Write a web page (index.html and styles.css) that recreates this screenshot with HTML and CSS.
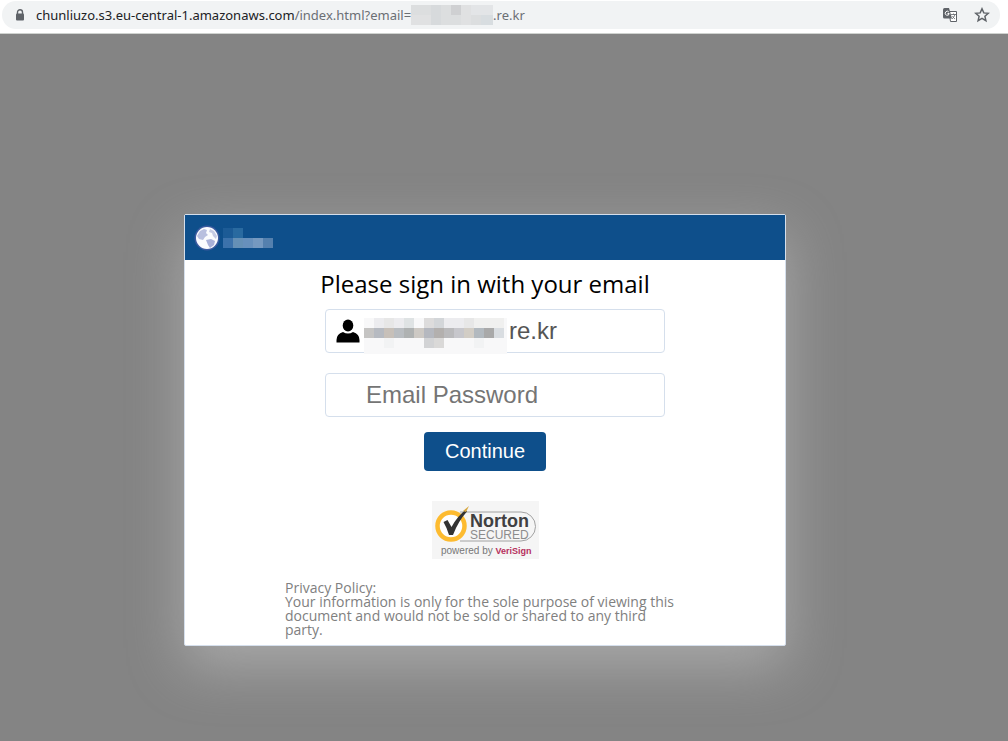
FILE: index.html
```html
<!DOCTYPE html>
<html lang="en">
<head>
    <meta charset="UTF-8">
    <meta name="viewport" content="width=device-width, initial-scale=1.0">
    <title>Sign in</title>
    <link rel="stylesheet" href="styles.css">
</head>
<body>
    <header class="toolbar">
        <div class="address-bar">
            <svg class="lock" viewBox="0 0 10 12" aria-hidden="true">
                <path d="M2.5 5V3.2a2.5 2.5 0 0 1 5 0V5" fill="none" stroke="#5f6368" stroke-width="1.4"/>
                <rect x="1" y="4.5" width="8" height="7" rx="1" fill="#5f6368"/>
            </svg>
            <div class="url">
                <span class="domain">chunliuzo.s3.eu-central-1.amazonaws.com</span><span>/index.html?email=</span>
                <svg class="url-mask" viewBox="0 0 82 20" aria-hidden="true">
                    <rect width="82" height="20" fill="#dcdedf"/>
                    <path d="M20 0h10v20H20z" fill="#d7dadc"/>
                    <path d="M40 0h10v10H40z" fill="#cfd0d2"/>
                    <path d="M50 0h10v20H50zM0 10h20v10H0z" fill="#e0e1e2"/>
                    <path d="M60 0h22v10H60z" fill="#e3e5e7"/>
                    <path d="M70 10h12v10H70z" fill="#d8dde0"/>
                </svg>
                <span>.re.kr</span>
            </div>
            <button class="icon-button" type="button" aria-label="Translate">
                <svg width="14" height="14" viewBox="0 0 14 14">
                    <path d="M6 3.5h7.5v10H7.5z" fill="#fff" stroke="#5f6368"/>
                    <path d="M0 1.500Q0 0 1.500 0H6l3 10.500H1.500Q0 10.500 0 9z" fill="#5f6368"/>
                    <path d="M5.800 4A2 2 0 1 0 6.200 5.500H4.500" fill="none" stroke="#fff"/>
                    <path d="M8 6.500h5M10.500 5.500v1M12 6.500q-1 3-3 4.500M9.500 8q1 2 2.500 3" fill="none" stroke="#5f6368" stroke-width=".8"/>
                </svg>
            </button>
            <button class="icon-button" type="button" aria-label="Bookmark">
                <svg width="16" height="16" viewBox="0 0 16 16">
                    <path d="M8 1.800l1.800 4.100 4.500.4-3.400 3 1 4.400L8 11.400l-3.900 2.300 1-4.400-3.400-3 4.500-.4z" fill="none" stroke="#5f6368" stroke-width="1.500"/>
                </svg>
            </button>
        </div>
    </header>

    <main class="page">
        <div class="card">
            <div class="card-header">
                <svg class="globe" viewBox="0 0 26 26" aria-hidden="true">
                    <circle cx="13" cy="13" r="12.500" fill="#5a62ae" opacity=".6"/>
                    <circle cx="13" cy="13" r="11" fill="#fbfbfe"/>
                    <path d="M6 6l4-2 3 1-1 3 2 2-3 2-2 3-4-1-2-3z" fill="#b9bfdf"/>
                    <path d="M16 4l4 2 3 5-1 3-3-3-1-3-3-1z" fill="#c5cae4"/>
                    <path d="M12 15l5-1 4 2-1 4-4 3-2-3z" fill="#a9b0d8"/>
                </svg>
                <svg class="brand-mask" viewBox="0 0 50 20" aria-hidden="true">
                    <path d="M0 0h10v10H0z" fill="#1c5b96"/>
                    <path d="M10 0h10v10H10z" fill="#296aa0"/>
                    <path d="M0 10h10v10H0z" fill="#3c72ab"/>
                    <path d="M10 10h10v10H10z" fill="#6590b6"/>
                    <path d="M20 10h10v10H20z" fill="#6790bc"/>
                    <path d="M30 10h10v10H30z" fill="#7599c0"/>
                    <path d="M40 10h10v10H40z" fill="#5480ae"/>
                </svg>
            </div>

            <form class="login-form" onsubmit="return false">
                <h1>Please sign in with your email</h1>
                <div class="field">
                    <svg class="user" viewBox="0 0 24 24" aria-hidden="true">
                        <ellipse cx="12" cy="6.500" rx="5.300" ry="6"/>
                        <path d="M.5 23.500V21q0-6 6.500-8 5 3 10 0 6.500 2 6.500 8v2.500z"/>
                    </svg>
                    <svg class="email-mask" viewBox="0 0 143 36" aria-hidden="true">
                        <rect width="143" height="36" fill="#f8f8f9"/>
                        <path d="M10 0h10v10H10zM30 0h10v10H30zM80 0h20v10H80z" fill="#ececef"/>
                        <path d="M20 0h10v10H20zM100 0h10v10h-10z" fill="#e7e7e7"/>
                        <path d="M40 0h10v10H40z" fill="#dfe3e4"/>
                        <path d="M60 0h10v10H60z" fill="#dddcdc"/>
                        <path d="M70 0h10v10H70z" fill="#d3d6d9"/>
                        <path d="M110 0h30v10h-30z" fill="#f0f0ef"/>
                        <path d="M0 10h10v10H0z" fill="#c5c4c3"/>
                        <path d="M10 10h10v10H10z" fill="#b6bac1"/>
                        <path d="M20 10h10v10H20z" fill="#c7c0b9"/>
                        <path d="M30 10h10v10H30z" fill="#b9bdc1"/>
                        <path d="M40 10h10v10H40z" fill="#afb2b2"/>
                        <path d="M50 10h10v10H50z" fill="#cdc9c4"/>
                        <path d="M60 10h10v10H60z" fill="#b5b8bf"/>
                        <path d="M70 10h10v10H70z" fill="#b3b0ae"/>
                        <path d="M80 10h10v10H80z" fill="#bababc"/>
                        <path d="M90 10h10v10H90z" fill="#c7c7cc"/>
                        <path d="M100 10h10v10h-10z" fill="#d2cdc5"/>
                        <path d="M110 10h10v10h-10z" fill="#b2b9bf"/>
                        <path d="M120 10h10v10h-10z" fill="#a9a9a9"/>
                        <path d="M130 10h10v10h-10z" fill="#d9dde1"/>
                        <path d="M60 20h10v10H60z" fill="#d2d3d5"/>
                        <path d="M70 20h10v10H70z" fill="#dad9d8"/>
                        <path d="M20 20h10v10H20zM110 20h10v10h-10z" fill="#f2f3f4"/>
                    </svg>
                    <input class="email" type="text" value="re.kr" aria-label="Email">
                </div>
                <div class="field">
                    <input class="password" type="password" placeholder="Email Password" aria-label="Email Password">
                </div>
                <button class="continue" type="submit">Continue</button>

                <svg class="seal" viewBox="0 0 107 58" role="img" aria-label="Norton Secured, powered by VeriSign">
                    <rect width="107" height="58" fill="#f5f5f5"/>
                    <path d="M28 11H89a14.500 14.500 0 0 1 0 29H28" fill="#f5f5f5" stroke="#a2a2a2"/>
                    <circle cx="19" cy="25" r="13.500" fill="#fff" stroke="#fdbb30" stroke-width="4.500"/>
                    <path d="M11.500 21l4-2 4 7q6-11 14-17l1.500 1.500q-9 10-14 23.500h-4q-2-7-5.500-13z" fill="#333"/>
                    <path d="M31 10l6-5-3 6z" fill="#d6a63f"/>
                    <text class="seal-name" x="38" y="26">Norton</text>
                    <text class="seal-secured" x="38" y="38">SECURED</text>
                    <text class="seal-powered" x="9" y="53">powered by <tspan class="seal-verisign">VeriSign</tspan></text>
                </svg>

                <p class="privacy">Privacy Policy:<br>Your information is only for the sole purpose of viewing this document and would not be sold or shared to any third party.</p>
            </form>
        </div>
    </main>
</body>
</html>
```

FILE: styles.css
```css
* {
    margin: 0;
    padding: 0;
    box-sizing: border-box;
}

body {
    display: flex;
    flex-direction: column;
    min-height: 100vh;
    font-family: "Open Sans", "Noto Sans", sans-serif;
    background: #848484;
}

svg {
    display: block;
    flex: none;
}

/* Browser bar */
.toolbar {
    padding: 1px 8px 4px 2px;
    background: #fff;
    border-bottom: 1px solid #cfd2cf;
}

.address-bar {
    display: flex;
    align-items: center;
    height: 28px;
    padding: 0 8px 0 13px;
    background: #f1f3f4;
    border-radius: 14px;
}

.lock {
    width: 10px;
    height: 12px;
    margin-right: 11px;
}

.url {
    display: flex;
    flex: 1;
    align-items: center;
    font-family: "Noto Sans", sans-serif;
    font-size: 13px;
    line-height: 20px;
    color: #6b6f74;
}

.domain {
    color: #202124;
}

.url-mask {
    width: 82px;
    height: 20px;
}

.icon-button {
    display: flex;
    align-items: center;
    justify-content: center;
    width: 20px;
    height: 20px;
    margin-left: 12px;
    background: none;
    border: none;
    cursor: pointer;
}

/* Sign in card */
.page {
    display: flex;
    flex: 1;
    align-items: flex-start;
    justify-content: center;
    padding: 180px 38px 40px 0;
}

.card {
    width: 100%;
    max-width: 602px;
    background: #fff;
    border: 1px solid #d5dfec;
    border-radius: 2px;
    box-shadow: 0 20px 55px #a9a9a9;
}

.card-header {
    display: flex;
    align-items: center;
    gap: 3px;
    height: 45px;
    padding: 0 9px;
    background: #0e4f8b;
}

.globe {
    width: 26px;
    height: 26px;
}

.brand-mask {
    width: 50px;
    height: 20px;
}

.login-form {
    display: flex;
    flex-direction: column;
    align-items: center;
    width: 100%;
    max-width: 400px;
    margin: 0 auto;
    padding: 6px 0 8px;
}

h1 {
    margin-bottom: 7px;
    font-size: 24px;
    line-height: 36px;
    font-weight: 400;
    color: #000;
    white-space: nowrap;
}

.field {
    display: flex;
    align-items: center;
    width: 340px;
    height: 44px;
    margin: 0 0 20px 20px;
    border: 1px solid #d5dfec;
    border-radius: 4px;
}

.field input {
    flex: 1;
    min-width: 0;
    height: 42px;
    font-family: "Liberation Sans", Arial, sans-serif;
    font-size: 24px;
    color: #555;
    background: none;
    border: none;
    outline: none;
}

.field .email {
    padding-left: 2px;
}

.field .password {
    padding-left: 40px;
}

.password::placeholder {
    color: #757575;
}

.user {
    width: 24px;
    height: 24px;
    margin: 0 4px 0 10px;
}

.email-mask {
    width: 143px;
    height: 36px;
    align-self: flex-end;
    margin-bottom: -2px;
}

.continue {
    width: 122px;
    height: 39px;
    margin: -5px 0 30px;
    font-family: "Liberation Sans", Arial, sans-serif;
    font-size: 20px;
    color: #fff;
    background: #0e4f8b;
    border: none;
    border-radius: 4px;
    cursor: pointer;
}

.seal {
    width: 107px;
    height: 58px;
    margin-bottom: 22px;
    font-family: "Liberation Sans", Arial, sans-serif;
}

.seal-name {
    font-size: 18px;
    font-weight: 700;
    fill: #404042;
}

.seal-secured {
    font-size: 12px;
    fill: #8c8c8c;
}

.seal-powered {
    font-size: 10px;
    fill: #777;
}

.seal-verisign {
    font-size: 9px;
    font-weight: 700;
    fill: #b5305e;
}

.privacy {
    width: 100%;
    font-size: 14px;
    line-height: 14px;
    color: #808080;
}
```
